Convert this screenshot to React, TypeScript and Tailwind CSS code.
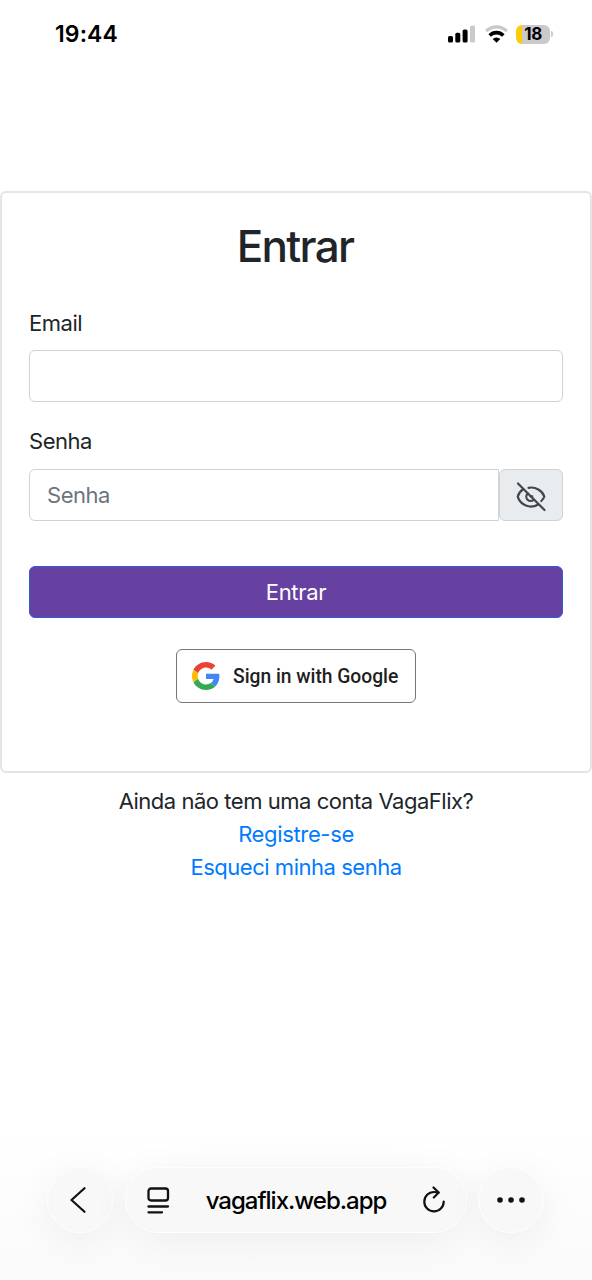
function SignalIcon() {
  return (
    <svg width="27" height="18" viewBox="0 0 27 18">
      <rect x="0" y="11" width="5" height="6.5" rx="1.6" fill="#000" />
      <rect x="7.3" y="7.8" width="5" height="9.7" rx="1.6" fill="#000" />
      <rect x="14.6" y="4.5" width="5" height="13" rx="1.6" fill="#000" />
      <rect x="22" y="0.5" width="5" height="17" rx="1.6" fill="#cacaca" />
    </svg>
  );
}

function WifiIcon() {
  return (
    <svg width="23" height="18" viewBox="0 0 23 18" fill="none">
      <path d="M1.2 6.200a14.600 14.600 0 0 1 20.600 0" stroke="#c8c8c8" strokeWidth="3.300" />
      <path d="M4.700 10.400a9.600 9.600 0 0 1 13.600 0" stroke="#000" strokeWidth="3.600" />
      <path d="M11.500 17.700 7.700 14a5.300 5.300 0 0 1 7.600 0z" fill="#000" />
    </svg>
  );
}

function EyeOffIcon() {
  return (
    <svg width="30" height="30" viewBox="0 0 30 30" fill="none" stroke="#43474b" strokeWidth="2.2" strokeLinecap="round" className="relative top-0.5">
      <path d="M2 1.5 28.5 28" />
      <path d="M12.5 5.8C19.5 4.3 26.5 8.8 28.3 14.5c-.6 1.9-1.7 3.4-3 4.5" />
      <path d="M7.2 7.3C4.5 9 2.5 11.7 1.7 14.7c2.6 8.4 12.3 12.7 20.6 7.8" />
      <path d="M11.6 11.6a4.2 4.2 0 0 0 6.1 6.1" />
      <path d="M14.5 14.3h1.8" />
    </svg>
  );
}

function GoogleLogo() {
  return (
    <svg width="28" height="28" viewBox="0 0 48 48">
      <path fill="#EA4335" d="M24 9.5c3.54 0 6.71 1.22 9.21 3.6l6.85-6.85C35.9 2.38 30.47 0 24 0 14.62 0 6.51 5.38 2.56 13.22l7.98 6.19C12.43 13.72 17.74 9.5 24 9.5z" />
      <path fill="#4285F4" d="M46.98 24.55c0-1.57-.15-3.09-.38-4.55H24v9.02h12.94c-.58 2.96-2.26 5.48-4.78 7.18l7.73 6c4.51-4.18 7.09-10.36 7.09-17.65z" />
      <path fill="#FBBC05" d="M10.53 28.59c-.48-1.45-.76-2.99-.76-4.59s.27-3.14.76-4.59l-7.98-6.19C.92 16.46 0 20.12 0 24c0 3.88.92 7.54 2.56 10.78l7.97-6.19z" />
      <path fill="#34A853" d="M24 48c6.48 0 11.93-2.13 15.89-5.81l-7.73-6c-2.15 1.45-4.92 2.3-8.16 2.3-6.26 0-11.57-4.22-13.47-9.91l-7.98 6.19C6.51 42.62 14.62 48 24 48z" />
    </svg>
  );
}

function StatusBar() {
  return (
    <header className="flex h-[68px] items-center justify-between pl-[55px] pr-[39px]">
      <span className="text-[23px] font-semibold tracking-[0.1px] text-black">19:44</span>
      <div className="flex items-center">
        <SignalIcon />
        <div className="ml-2.5">
          <WifiIcon />
        </div>
        <div className="ml-2 flex h-[19px] w-[34px] items-center justify-center rounded-md bg-linear-to-r from-[#fccb0a] from-18% to-[#cacaca] to-18% text-[17px] font-bold leading-none text-black">
          18
        </div>
        <div className="ml-px h-1.5 w-0.5 rounded-r-full bg-[#cacaca]" />
      </div>
    </header>
  );
}

function LoginCard() {
  return (
    <section className="mt-[123px] h-[582px] rounded-md border-2 border-[#e5e5e5] px-[27px] pt-[27px]">
      <h1 className="pr-0.5 text-center text-[44px] font-medium leading-[53px] tracking-[-1.7px]">Entrar</h1>

      <label htmlFor="email" className="mt-[34px] block leading-[33px]">
        Email
      </label>
      <input id="email" type="email" className="mt-2.5 block h-[52px] w-full rounded-md border border-[#d0d3d6] px-[17px]" />

      <label htmlFor="senha" className="mt-[23px] block leading-[33px]">
        Senha
      </label>
      <div className="mt-[11px] flex h-[52px]">
        <input
          id="senha"
          type="password"
          placeholder="Senha"
          className="min-w-0 flex-1 rounded-l-md border border-[#d0d3d6] px-[17px] placeholder:text-[#6c757d]"
        />
        <button type="button" aria-label="Mostrar senha" className="flex w-16 items-center justify-center rounded-md border border-[#d0d3d6] bg-[#e9ecef]">
          <EyeOffIcon />
        </button>
      </div>

      <button type="submit" className="mt-[45px] block h-[52px] w-full rounded-md border border-[#2a5fd0] bg-[#6741a1] tracking-[-0.3px] text-white">
        Entrar
      </button>

      <button
        type="button"
        className="mx-auto mt-[31px] flex h-[54px] w-60 items-center rounded-md border border-[#747775] pl-[15px] font-[Roboto,sans-serif] text-[19.3px] font-medium tracking-[-0.03px] text-[#1f1f1f]"
      >
        <GoogleLogo />
        <span className="ml-[13px] whitespace-nowrap pt-0.5">Sign in with Google</span>
      </button>
    </section>
  );
}

function BrowserBar() {
  return (
    <nav className="mt-auto flex h-[150px] items-start bg-linear-to-b from-white to-[#fafafa] pl-[47px] pt-[37px] text-[#111]">
      <button aria-label="Voltar" className="flex size-[66px] items-center justify-center rounded-full border border-white bg-[#f8f8f8] shadow-[0_8px_40px_rgba(0,0,0,0.06)]">
        <svg width="16" height="26" viewBox="0 0 16 26" fill="none" stroke="currentColor" strokeWidth="2.2" strokeLinecap="round" strokeLinejoin="round" className="-ml-1">
          <path d="M14.5 1.2 1.5 13l13 11.8" />
        </svg>
      </button>

      <div className="ml-3 flex h-[66px] w-[342px] items-center rounded-full border border-white bg-[#f8f8f8] px-[21px] shadow-[0_8px_40px_rgba(0,0,0,0.06)]">
        <svg width="23" height="27" viewBox="0 0 23 27" fill="none" stroke="currentColor" strokeWidth="2.3" strokeLinecap="round">
          <rect x="1.5" y="1.5" width="19.5" height="12" rx="2.5" />
          <path d="M1.5 19.5h19.5M1.5 25.3h13.5" />
        </svg>
        <span className="flex-1 pr-px pt-px text-center text-[24px] font-medium tracking-[-1px] text-black">vagaflix.web.app</span>
        <svg width="22" height="27" viewBox="0 0 22 27" fill="none" stroke="currentColor" strokeWidth="2.2" strokeLinecap="round" strokeLinejoin="round" className="relative -top-px">
          <path d="M20.7 15.7A9.7 9.7 0 1 1 11 6c1.500 0 3 .1 4.500.5" />
          <path d="m10.5 1.5 5.2 5-4.9 5" />
        </svg>
      </div>

      <button aria-label="Mais" className="ml-[11px] flex size-[66px] items-center justify-center rounded-full border border-white bg-[#f8f8f8] shadow-[0_8px_40px_rgba(0,0,0,0.06)]">
        <svg width="28" height="6" viewBox="0 0 28 6" fill="currentColor">
          <circle cx="3" cy="3" r="2.8" />
          <circle cx="14" cy="3" r="2.8" />
          <circle cx="25" cy="3" r="2.8" />
        </svg>
      </button>
    </nav>
  );
}

export default function App() {
  return (
    <main className="flex h-[1280px] w-[592px] flex-col overflow-hidden bg-white font-[Inter,sans-serif] text-[22px] tracking-[-0.47px] text-[#212529]">
      <StatusBar />
      <LoginCard />
      <div className="mt-3 flex flex-col items-center leading-[33px]">
        <p>Ainda não tem uma conta VagaFlix?</p>
        <a href="#" className="tracking-[-0.35px] text-[#007bff]">Registre-se</a>
        <a href="#" className="text-[#007bff]">Esqueci minha senha</a>
      </div>
      <BrowserBar />
    </main>
  );
}
